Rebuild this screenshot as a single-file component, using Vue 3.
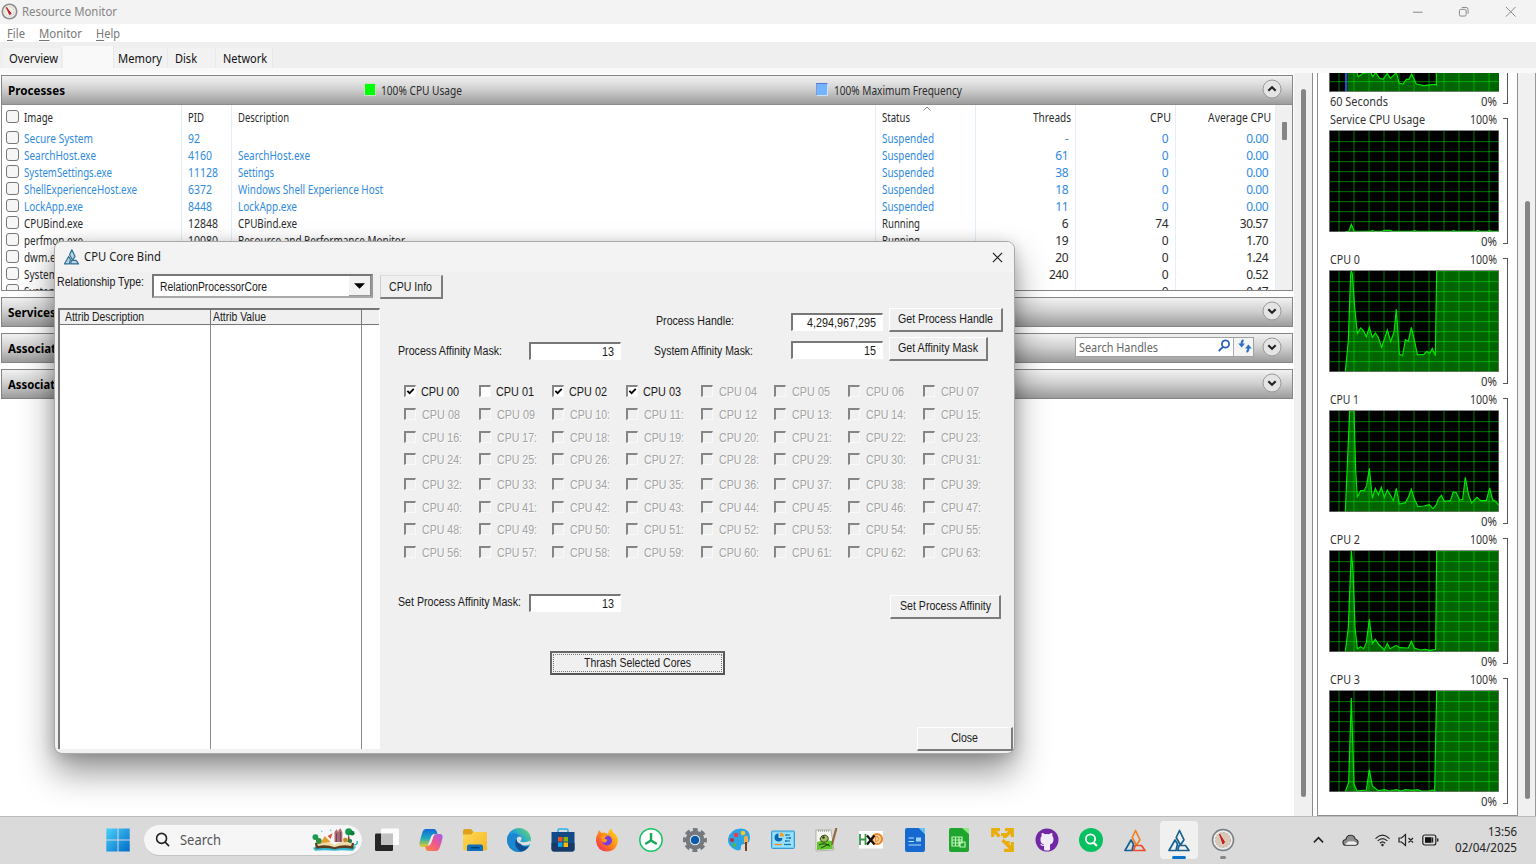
<script setup>
// Condenses a label horizontally to a given width in px, keeping its place in the flow.
const vFit = {
  mounted(el, { value }) {
    el.style.display = 'inline-block'
    const natural = el.getBoundingClientRect().width
    el.style.transformOrigin = 'left center'
    el.style.transform = `scaleX(${value / natural})`
    el.style.marginRight = `${value - natural}px`
  },
}

const tabs = [
  { name: 'Overview', w: 49, cls: 'tab-overview' },
  { name: '', w: 0, cls: 'tab-cpu' },
  { name: 'Memory', w: 44, cls: 'tab-memory' },
  { name: 'Disk', w: 22, cls: 'tab-disk' },
  { name: 'Network', w: 44, cls: 'tab-network' },
]

const rows = [
  { image: 'Secure System', iw: 69, pid: '92', pw: 12, desc: '', dw: 0, status: 'Suspended', threads: '-', cpu: '0', avg: '0.00', off: true },
  { image: 'SearchHost.exe', iw: 72, pid: '4160', pw: 24, desc: 'SearchHost.exe', dw: 72, status: 'Suspended', threads: '61', cpu: '0', avg: '0.00', off: true },
  { image: 'SystemSettings.exe', iw: 88, pid: '11128', pw: 30, desc: 'Settings', dw: 36, status: 'Suspended', threads: '38', cpu: '0', avg: '0.00', off: true },
  { image: 'ShellExperienceHost.exe', iw: 113, pid: '6372', pw: 24, desc: 'Windows Shell Experience Host', dw: 145, status: 'Suspended', threads: '18', cpu: '0', avg: '0.00', off: true },
  { image: 'LockApp.exe', iw: 59, pid: '8448', pw: 24, desc: 'LockApp.exe', dw: 59, status: 'Suspended', threads: '11', cpu: '0', avg: '0.00', off: true },
  { image: 'CPUBind.exe', iw: 59, pid: '12848', pw: 30, desc: 'CPUBind.exe', dw: 59, status: 'Running', threads: '6', cpu: '74', avg: '30.57' },
  { image: 'perfmon.exe', iw: 59, pid: '10080', pw: 30, desc: 'Resource and Performance Monitor', dw: 167, status: 'Running', threads: '19', cpu: '0', avg: '1.70' },
  { image: 'dwm.exe', iw: 42, pid: '', pw: 0, desc: '', dw: 0, status: '', threads: '20', cpu: '0', avg: '1.24' },
  { image: 'System', iw: 34, pid: '', pw: 0, desc: '', dw: 0, status: '', threads: '240', cpu: '0', avg: '0.52' },
  { image: 'System', iw: 34, pid: '', pw: 0, desc: '', dw: 0, status: '', threads: '', cpu: '0', avg: '0.47' },
]

const closedPanels = [
  { name: 'Services', w: 48 },
  { name: 'Associated Handles', w: 112, search: true },
  { name: 'Associated Modules', w: 112 },
]

const charts = [
  { title: 'Service CPU Usage', w: 95, pts: '137,393 147,393 155,371 163,391 212,392 218,390 224,392 248,392 254,389 272,389 277,392 338,392 345,390 352,392 456,392 462,390 468,392 528,392 535,390 541,392 564,392 570,390 576,392 597,392' },
  { title: 'CPU 0', w: 30, pts: '137,393 146,300 153,100 155,90 158,100 165,200 173,278 183,262 191,270 200,288 209,260 218,290 227,277 236,290 246,320 263,268 273,302 283,275 290,206 299,340 309,345 317,297 326,302 335,260 344,298 353,342 372,342 381,332 390,338 398,323 407,345 411,90 597,90' },
  { title: 'CPU 1', w: 29, pts: '137,393 150,90 163,90 168,270 173,348 183,330 193,330 201,315 209,263 218,353 227,323 236,342 245,320 254,350 263,328 272,343 281,360 290,323 299,370 317,366 326,350 335,326 344,355 355,378 372,376 389,372 400,384 410,372 416,355 425,344 434,362 452,360 461,334 470,336 480,358 489,356 497,290 507,344 516,367 532,350 543,360 560,360 570,322 579,358 588,362 597,374' },
  { title: 'CPU 2', w: 30, pts: '137,393 146,320 155,90 160,150 166,320 173,384 183,378 192,384 200,366 209,296 218,368 227,356 236,370 254,388 263,368 271,384 290,374 300,381 326,382 335,362 344,382 362,388 376,386 390,389 408,386 411,90 597,90' },
  { title: 'CPU 3', w: 30, pts: '137,393 147,365 155,112 163,370 172,391 200,388 209,327 218,376 236,390 255,387 270,391 290,387 303,391 317,387 340,389 354,387 365,391 390,391 398,388 405,391 411,90 597,90' },
]
const gridX = [118, 163, 208, 253, 298, 343, 388, 433, 478, 523, 568]
const gridY = [123, 153, 183, 213, 243, 273, 303, 333, 363]

const noColon = [8, 9, 12]
const cpus = Array.from({ length: 64 }, (_, i) => ({
  label: 'CPU ' + String(i).padStart(2, '0') + (i < 8 || noColon.includes(i) ? '' : ':'),
  w: i < 8 || noColon.includes(i) ? 38 : 40,
  enabled: i < 4,
  checked: i === 0 || i === 2 || i === 3,
}))
</script>

<template>
  <div class="screen">
    <header class="titlebar">
      <svg class="app-icon" viewBox="0 0 18 18">
        <circle cx="9" cy="9" r="8.500" fill="#8e8e8e" /><circle cx="9" cy="9" r="6.800" fill="#f4f1ed" />
        <circle cx="9" cy="9" r="5" fill="none" stroke="#c9b9ae" stroke-width="1" stroke-dasharray="1.5 1" />
        <path d="M5.6 4.6 L10.8 11.2 L9 12.2 Z" fill="#d3201f" stroke="#c01818" />
      </svg>
      <span v-fit="95">Resource Monitor</span>
      <div class="win-buttons">
        <svg viewBox="0 0 12 12"><path d="M1 6.5H11" /></svg>
        <svg viewBox="0 0 12 12"><rect x="1.5" y="3.5" width="7" height="7" rx="1.5" /><path d="M4 1.5H8.5Q10.5 1.5 10.5 3.5V8" /></svg>
        <svg viewBox="0 0 12 12"><path d="M1 1L11 11M11 1L1 11" /></svg>
      </div>
    </header>
    <nav class="menubar">
      <span class="m-file"><span v-fit="18"><u>F</u>ile</span></span>
      <span class="m-mon"><span v-fit="43"><u>M</u>onitor</span></span>
      <span><span v-fit="24"><u>H</u>elp</span></span>
    </nav>
    <div class="tabs">
      <div v-for="t in tabs" :key="t.cls" class="tab" :class="t.cls"><span v-if="t.name" v-fit="t.w">{{ t.name }}</span></div>
    </div>

    <main class="body">
      <section class="left">
        <div class="panels">
          <div class="panel processes">
            <div class="panel-head">
              <b v-fit="57">Processes</b>
              <i class="sw green"></i><span class="usage"><span v-fit="81">100% CPU Usage</span></span>
              <i class="sw blue"></i><span v-fit="128">100% Maximum Frequency</span>
              <svg class="round" viewBox="0 0 20 20"><circle cx="10" cy="10" r="9" /><path d="M6.3 11.8L10 8.2L13.7 11.8" /></svg>
            </div>
            <div class="table">
              <div class="tr th">
                <div class="c image"><i class="box"></i><span v-fit="29">Image</span></div>
                <div class="c"><span v-fit="16">PID</span></div>
                <div class="c"><span v-fit="51">Description</span></div>
                <div class="c status"><span v-fit="28">Status</span>
                  <svg class="sort" viewBox="0 0 8 5"><path d="M.5 4.5L4 1L7.500 4.500" /></svg>
                </div>
                <div class="c r h"><span v-fit="38">Threads</span></div>
                <div class="c r h"><span v-fit="21">CPU</span></div>
                <div class="c r h"><span v-fit="63">Average CPU</span></div>
              </div>
              <div v-for="(row, i) in rows" :key="i" class="tr" :class="{ off: row.off }">
                <div class="c image"><i class="box"></i><span v-fit="row.iw">{{ row.image }}</span></div>
                <div class="c"><span v-if="row.pid" v-fit="row.pw">{{ row.pid }}</span></div>
                <div class="c"><span v-if="row.desc" v-fit="row.dw">{{ row.desc }}</span></div>
                <div class="c"><span v-if="row.status" v-fit="row.off ? 52 : 38">{{ row.status }}</span></div>
                <div class="c r">{{ row.threads }}</div>
                <div class="c r">{{ row.cpu }}</div>
                <div class="c r">{{ row.avg }}</div>
              </div>
              <div class="table-scroll"><i></i></div>
            </div>
          </div>
          <div v-for="p in closedPanels" :key="p.name" class="panel closed">
            <div class="panel-head">
              <b v-fit="p.w">{{ p.name }}</b>
              <div v-if="p.search" class="search">
                <span v-fit="79">Search Handles</span>
                <svg class="mag" viewBox="0 0 14 14"><circle cx="8.500" cy="5" r="3.600" /><path d="M5.900 7.800L1.800 12" /></svg>
                <svg class="refresh" viewBox="0 0 14 14"><path d="M5.500 1.200Q3.600 1.800 3.600 5" /><path d="M8.500 12.800Q10.400 12.200 10.400 9" /><path d="M.2 4.500H7L3.600 8.500ZM7 9.500H13.800L10.400 5.500Z" class="head" /></svg>
              </div>
              <svg class="round" viewBox="0 0 20 20"><circle cx="10" cy="10" r="9" /><path d="M6.300 8.200L10 11.800L13.700 8.200" /></svg>
            </div>
          </div>
        </div>
        <div class="vscroll left-scroll"><i></i></div>
      </section>

      <section class="right">
        <div class="graphs">
          <div class="graph first">
            <div class="plot-wrap">
              <svg class="plot cut" viewBox="88 337 510 57" preserveAspectRatio="none">
                <rect x="88" y="330" width="510" height="64" fill="#000" />
                <path d="M143 394V330H170L176 348L190 338L213 334L219 348L228 336L240 353L250 356L263 338L272 353L290 336L299 368L310 370L320 356L328 356L336 340L350 370L372 375L405 371L410 373L411 330H598V394Z" fill="#006400" />
                <path v-for="x in gridX" :key="x" :d="`M${x} 330V394`" class="grid" />
                <path d="M88 363H598" class="grid" />
                <path d="M139 330V394" stroke="#2f5bff" stroke-width="5" />
                <path d="M170 330L176 348L190 338L213 334L219 348L228 336L240 353L250 356L263 338L272 353L290 336L299 368L310 370L320 356L328 356L336 340L350 370L372 375L405 371L410 373V330" class="trace" />
                <path d="M89.500 330V394M88 392.500H598" stroke="#999" stroke-width="2" fill="none" />
              </svg>
            </div>
            <div class="cap low"><span v-fit="58">60 Seconds</span><span v-fit="16">0%</span></div>
            <i class="bracket"></i>
          </div>
          <div v-for="c in charts" :key="c.title" class="graph">
            <div class="cap"><span v-fit="c.w">{{ c.title }}</span><span v-fit="27">100%</span></div>
            <svg class="plot" viewBox="88 88 510 306" preserveAspectRatio="none">
              <rect x="88" y="88" width="510" height="306" fill="#000" />
              <polygon :points="c.pts + ' 597,393 137,393'" fill="#006400" />
              <path v-for="x in gridX" :key="'x' + x" :d="`M${x} 88V394`" class="grid" />
              <path v-for="y in gridY" :key="'y' + y" :d="`M88 ${y}H598`" class="grid" />
              <polyline :points="c.pts" class="trace" />
              <path d="M88 89.500H598" stroke="#8c8c8c" stroke-width="3" />
              <path d="M89.500 88V394M88 393H598M597 88V394" stroke="#999" stroke-width="2" />
            </svg>
            <div class="cap low"><span></span><span v-fit="16">0%</span></div>
            <i class="bracket"></i>
          </div>
        </div>
        <div class="vscroll right-scroll"><i></i></div>
      </section>
    </main>

    <footer class="taskbar">
      <svg class="ic start" viewBox="0 0 24 24">
        <defs>
          <linearGradient id="win" x1="0" y1="0" x2="24" y2="24" gradientUnits="userSpaceOnUse"><stop offset="0" stop-color="#4cd2fb" /><stop offset="1" stop-color="#0069c8" /></linearGradient>
          <linearGradient id="edge" x1="0" y1="1" x2="1" y2="0"><stop offset="0" stop-color="#0c59a4" /><stop offset=".5" stop-color="#1b9de2" /><stop offset="1" stop-color="#6fdf5a" /></linearGradient>
          <linearGradient id="ff" x1="1" y1="0" x2="0" y2="1"><stop offset="0" stop-color="#ffe226" /><stop offset=".5" stop-color="#ff8a16" /><stop offset="1" stop-color="#f01865" /></linearGradient>
          <linearGradient id="cpa" x1="0" y1="0" x2="0" y2="1"><stop offset="0" stop-color="#1267d8" /><stop offset=".5" stop-color="#1aa8c0" /><stop offset="1" stop-color="#e8cf22" /></linearGradient>
          <linearGradient id="cpb" x1="1" y1="0" x2="0" y2="1"><stop offset="0" stop-color="#a35bf0" /><stop offset=".5" stop-color="#f0588a" /><stop offset="1" stop-color="#ff8b35" /></linearGradient>
          <linearGradient id="fold" x1="0" y1="0" x2="1" y2="1"><stop offset="0" stop-color="#ffd95a" /><stop offset="1" stop-color="#f4b722" /></linearGradient>
        </defs>
        <path d="M.3 .5H11.500V11.500H.3ZM12.500 .5H23.700V11.500H12.500ZM.3 12.500H11.500V23.500H.3ZM12.500 12.500H23.700V23.500H12.500Z" fill="url(#win)" />
      </svg>
      <div class="searchbox">
        <svg class="lens" viewBox="0 0 16 16"><circle cx="7" cy="6.800" r="5.300" /><path d="M10.800 10.800L15 15" /></svg>
        <span v-fit="41">Search</span>
        <svg class="book" viewBox="0 0 48 24">
          <path d="M2 20Q12 16 24 20Q36 16 46 19L43 23Q30 22 24 23Q14 22 4 23Z" fill="#35b8cf" />
          <path d="M4 15Q15 14 24 18Q33 14 44 15L43 21Q32 19 24 21.500Q15 19 5 21Z" fill="#5a3c1e" />
          <path d="M6 14Q16 12 24 17Q32 12 42 14L41 18Q32 16 24 19.500Q16 16 7 18Z" fill="#f0d9a8" />
          <path d="M24 14V4L26 1L28 4V2L30 0L32 4V14Z" fill="#b06a6c" /><path d="M26 5V14M30 4V14" stroke="#5a4670" />
          <path d="M37 14L38.500 5L40 14Z" fill="#7a4a1c" /><circle cx="38.500" cy="3.600" r="3.600" fill="#159a4c" /><circle cx="42" cy="5" r="2.500" fill="#0d8040" />
          <circle cx="4.500" cy="9" r="3" fill="#1a9a50" /><circle cx="8" cy="13" r="3" fill="#2f8f3a" /><path d="M10 15L14 8L20 14Z" fill="#e69b2e" /><path d="M17 8L22 5L20 11Z" fill="#d8503e" />
          <circle cx="35" cy="12" r="2.300" fill="#c88925" /><circle cx="40" cy="13" r="2" fill="#237e49" />
          <circle cx="11" cy="3" r=".8" fill="#58c8e8" /><circle cx="20" cy="2" r=".8" fill="#58c8e8" /><path d="M44 17Q48 17 47 13" stroke="#28b6c6" stroke-width="1.500" fill="none" />
        </svg>
      </div>
      <div class="apps">
        <svg class="ic" viewBox="0 0 24 24"><rect x="0" y="5.500" width="18" height="17.500" rx="1.200" fill="#262626" /><rect x="6" y=".5" width="18" height="16.500" rx="1" fill="#fff" opacity=".92" /><rect x="6" y="5.500" width="12" height="11.500" fill="#c2c2c2" /></svg>
        <svg class="ic" viewBox="0 0 24 24">
          <path d="M7 1H15Q17 1 18 4L18.500 6H15Q13 6 12 9L9.500 17Q9 19 6 19H3Q0 19 .5 15Q1.500 10 3.500 4Q4.500 1 7 1Z" fill="url(#cpa)" />
          <path d="M17 23H9Q7 23 6.500 20L6 18H9Q11 18 12 15L14.500 8Q15 6 18 6H21Q24 6 23.500 10Q22.500 15 20.500 20Q19.500 23 17 23Z" fill="url(#cpb)" />
          <path d="M9 17L12.500 8Q13 6.500 15 6.500L12 15Q11 17.500 9 17Z" fill="#e8e8f2" />
        </svg>
        <svg class="ic" viewBox="0 0 24 24"><path d="M0 3Q0 1 2 1H8L10.500 4H22Q24 4 24 6V10H0Z" fill="#e0a019" /><path d="M0 6.500H8L10.500 4H22.500Q24 4 24 5.500V21Q24 22.500 22.500 22.500H1.500Q0 22.500 0 21Z" fill="url(#fold)" /><path d="M4 23V18.500Q4 16.500 6 16.500H18Q20 16.500 20 18.500V23Z" fill="#0d70bd" /><path d="M7.500 19.700H16.500" stroke="#063f7a" stroke-width="1.500" /></svg>
        <svg class="ic" viewBox="0 0 24 24">
          <circle cx="12" cy="12" r="12" fill="url(#edge)" />
          <path d="M1 8Q5 4 10 6Q15 8 14.500 11Q9 7.500 8 14Q8 20 14 23.500Q3 25 .3 14Q0 11 1 8Z" fill="#1b87d0" />
          <path d="M9 11Q6 18 13.500 23.500Q19 23 22 18Q14 20 13 14Q10 13 9 11Z" fill="#0f4c91" />
          <path d="M13 13.500Q15.500 11 14 9Q11.500 7.500 9.800 10Q9.500 13 11 14.500Q12 15.500 13.300 15.500Q16 19 24 16L23.500 12.500Q18 15.500 13 13.500Z" fill="#dedede" />
        </svg>
        <svg class="ic" viewBox="0 0 24 24"><path d="M7 5V2.500Q7 1 8.500 1H15.500Q17 1 17 2.500V5" fill="none" stroke="#2bb3ee" stroke-width="1.600" /><path d="M.5 4H23.500V21Q23.500 23.500 21 23.500H3Q.5 23.500 .5 21Z" fill="#134a86" /><path d="M.5 15H23.500V21Q23.500 23.500 21 23.500H3Q.5 23.500 .5 21Z" fill="#173a68" /><path d="M7 9H11.500V13.500H7Z" fill="#f25022" /><path d="M12.500 9H17V13.500H12.500Z" fill="#7fba00" /><path d="M7 14.500H11.500V19H7Z" fill="#00a4ef" /><path d="M12.500 14.500H17V19H12.500Z" fill="#ffb900" /></svg>
        <svg class="ic" viewBox="0 0 24 24"><path d="M3 5L4 2L6.500 5L9 4.500Q12 5 13 6Q14 2 16 .5Q17 3 19 5Q23 8 23 13Q22 23 12 23.500Q2 23 1 13Q1 8 3 5Z" fill="url(#ff)" /><circle cx="12" cy="12.500" r="5" fill="#7a3ce0" /><path d="M6 9Q9 6 13 8Q9 9 10 11Q13 11 12 13Q9 16 7 13Z" fill="#ff9b1c" /></svg>
        <svg class="ic" viewBox="0 0 24 24"><circle cx="12" cy="12" r="11.200" fill="#fff" stroke="#1cc368" stroke-width="1.500" /><path d="M12 5V12.500M12 12.500L6.200 16M12 12.500L17.800 16" stroke="#16a858" stroke-width="2.400" fill="none" /></svg>
        <svg class="ic" viewBox="0 0 24 24"><circle cx="12" cy="12" r="7" fill="none" stroke="#75797e" stroke-width="5" /><circle cx="12" cy="12" r="10.300" fill="none" stroke="#75797e" stroke-width="3.400" stroke-dasharray="4.800 3.290" stroke-dashoffset="2.400" /><circle cx="12" cy="12" r="5.200" fill="#f2f2f2" /><circle cx="12" cy="12" r="4.300" fill="#0a5ba8" /></svg>
        <svg class="ic" viewBox="0 0 24 24"><path d="M14 .5Q23 1 23 9Q23 16 18 16Q13 16 14 20Q14 23.500 9 22Q0 18 1 11Q3 1 14 .5Z" fill="#2ea3e4" /><circle cx="9" cy="7" r="2.300" fill="#e83f46" /><circle cx="16" cy="5" r="2.300" fill="#f6c72c" /><circle cx="5" cy="12" r="2.100" fill="#b92f3a" /><circle cx="7.500" cy="17" r="2" fill="#48b955" /><path d="M17 9Q19 6 21 9V15H17Z" fill="#efb04c" /><path d="M18 14H20V23H18Z" fill="#76401b" /></svg>
        <svg class="ic" viewBox="0 0 24 24"><rect x=".5" y="3" width="23" height="17.500" rx="1" fill="#6dd1fa" stroke="#3a9bd4" /><rect x="2" y="4.500" width="20" height="14.500" fill="#99e0fb" /><path d="M7.500 5.500A4 4 0 1 0 11.500 10H7.500Z" fill="#0b65b0" /><path d="M9 4.500V8.500H13A4 4 0 0 0 9 4.500Z" fill="#f79c28" /><path d="M15 7H19M15 10H20M14 13H19M15 6V8M19 9V11M15 12V14" stroke="#0b65b0" /><path d="M3.500 16.500H11" stroke="#f28b1c" stroke-width="1.300" /><path d="M13 16.500H20" stroke="#1377b8" stroke-width="1.300" /></svg>
        <svg class="ic" viewBox="0 0 24 24"><path d="M1 2H16L19 22L1 23Z" fill="#f5f5ee" stroke="#999" stroke-width=".7" /><path d="M2 14Q9 11 17 13L18 21L2 22Z" fill="#64c42c" /><path d="M5 11Q6 7 10 7Q14 8 13 12Q11 15 7 14Z" fill="#a7bb63" stroke="#304c20" /><circle cx="8.500" cy="9.500" r="1.200" fill="#26361a" /><path d="M4 17Q9 14 15 18M6 20L14 16" stroke="#17420c" fill="none" /><path d="M22 .5L18 15L17 17L17 14L20.500 .5Z" fill="#b87a35" stroke="#6d4319" stroke-width=".6" /><path d="M3 3H15" stroke="#777" stroke-dasharray="1 1" /></svg>
        <svg class="ic" viewBox="0 0 24 24"><rect y="3" width="24" height="17.500" fill="#fff" /><path d="M1 6V17M6.500 6V17M1 11.500H6.500" stroke="#38984b" stroke-width="1.800" /><circle cx="18" cy="11" r="5" fill="#f6d09c" stroke="#e98b28" stroke-width="2.200" /><path d="M16.500 8.500V13.500Q20 13.500 20 11Q20 8.500 16.500 8.500Z" fill="none" stroke="#e98b28" /><path d="M8 7.500L15.500 16.500M15.500 7.500L8 16.500" stroke="#111" stroke-width="2.200" /></svg>
        <svg class="ic" viewBox="0 0 24 24"><path d="M4 0H16L22 6V22Q22 24 20 24H4Q2 24 2 22V2Q2 0 4 0Z" fill="#1669cf" /><path d="M16 0L22 0V6Z" fill="#65c3f3" /><path d="M5.500 10H11M5.500 13.500H11M5.500 17H18" stroke="#b5ddff" stroke-width="1.200" /><rect x="13" y="9.500" width="5" height="4" fill="#9fd2ff" /></svg>
        <svg class="ic" viewBox="0 0 24 24"><path d="M4 0H16L22 6V22Q22 24 20 24H4Q2 24 2 22V2Q2 0 4 0Z" fill="#1fa42d" /><path d="M15 0H22V6Z" fill="#8de87f" /><path d="M5 9H15V15H5ZM8.500 9V18M12 9V18M5 12H15M5 15V18H12M13 14H18V19H13Z" stroke="#bff5b6" fill="none" stroke-width="1.200" /></svg>
        <svg class="ic" viewBox="0 0 24 24"><path d="M9 1.700H1.700V9M2 2L8.500 8.500M10 6.500H13.500V10M14 1.700H21.300V9M21 2L14.500 8.500M11.500 12L20 20.500M21.300 14V22.300H13M17 13V18" stroke="#e9ae0c" stroke-width="3.200" fill="none" /></svg>
        <svg class="ic" viewBox="0 0 24 24"><circle cx="12" cy="12" r="11.500" fill="#7228a4" /><path d="M9 22V18Q6 18.500 5 16Q7 16 8 17Q8.500 17 9 16.500Q5 15.500 5.500 11Q5.500 9 6.700 8Q6.200 6.500 6.800 5Q8.500 5 10 6.300Q12 5.800 14 6.300Q15.500 5 17.200 5Q17.800 6.500 17.300 8Q18.500 9 18.500 11Q18.500 15.500 15 16.500V22Q12 23 9 22Z" fill="#f2eaf8" /></svg>
        <svg class="ic" viewBox="0 0 24 24"><circle cx="12" cy="12" r="12" fill="#05c160" /><circle cx="11.500" cy="11" r="4.600" fill="none" stroke="#fff" stroke-width="1.800" /><path d="M14.500 14.500L18 18" stroke="#fff" stroke-width="2.200" /></svg>
        <svg class="ic tri" viewBox="0 0 24 24"><path d="M12.500 2.500L9.200 9.500L13.500 17L17 11.800Z" stroke="#f08224" /><path d="M8 12L2 22.500H9L10.500 16Z" stroke="#17608f" /><path d="M12 17.500H18.500L22 22.500H10.800Z" stroke="#ed4b2a" /></svg>
        <div class="active"><svg class="ic tri" viewBox="0 0 24 24"><path d="M12.500 2.500L9.200 9.500L13.500 17L17 11.800Z" stroke="#17608f" /><path d="M8 12L2 22.500H9L10.500 16Z" stroke="#17608f" /><path d="M12 17.500H18.500L22 22.500H10.800Z" stroke="#17608f" /></svg><i></i></div>
        <div class="running"><svg class="ic" viewBox="0 0 24 24"><circle cx="12" cy="12" r="11.300" fill="#778088" /><circle cx="12" cy="12" r="9.800" fill="#eeeae5" /><circle cx="12" cy="12" r="7.500" fill="#d9c8b9" stroke="#bdb0a2" stroke-dasharray="2 1.500" /><path d="M8.500 6L13.500 14L12 16Z" fill="#d2261f" stroke="#b91b16" /></svg><i></i></div>
      </div>
      <div class="tray">
        <svg class="t-chev" viewBox="0 0 12 8"><path d="M1 6.500L6 1.500L11 6.500" /></svg>
        <svg class="t-cloud" viewBox="0 0 18 14"><path d="M4 12.500Q1 12.500 1 9.500Q1 7 4 6.500Q5 2 9 2Q13 2 14 6Q17 7 17 9.500Q17 12.500 14 12.500Z" fill="#8d8d8d" stroke="#333" /><path d="M3.500 12Q6 7.500 10 8.500Q13 8 16 10.500Q16 12 14 12Z" fill="#efefef" stroke="none" /></svg>
        <svg class="t-wifi" viewBox="0 0 18 15"><path d="M1.500 6Q9 -1.500 16.500 6M3.800 8.500Q9 3.500 14.200 8.500M6.200 11Q9 8.200 11.800 11" /><circle cx="9" cy="12.800" r="1.300" fill="#222" stroke="none" /></svg>
        <svg class="t-snd" viewBox="0 0 16 14"><path d="M1 5H3.500L7.500 1.500V12.500L3.500 9H1ZM10.500 5L15 9.500M15 5L10.500 9.500" /></svg>
        <svg class="t-bat" viewBox="0 0 17 12"><rect x=".8" y="1" width="13" height="10" rx="2" /><rect x="3" y="3.200" width="6.500" height="5.600" fill="#111" stroke="none" /><path d="M10.500 3.500V8.500M15.700 4.500V7.500" stroke-width="1.500" /></svg>
        <div class="clock"><span v-fit="29">13:56</span><span v-fit="62">02/04/2025</span></div>
      </div>
    </footer>

    <div class="dialog">
      <div class="dlg-title">
        <svg class="dlg-icon tri" viewBox="0 0 24 24"><path d="M12.500 2.500L9.200 9.500L13.500 17L17 11.800Z" /><path d="M8 12L2 22.500H9L10.500 16Z" /><path d="M12 17.500H18.500L22 22.500H10.800Z" /></svg>
        <span v-fit="77">CPU Core Bind</span>
        <svg class="dlg-x" viewBox="0 0 12 12"><path d="M1 1L11 11M11 1L1 11" /></svg>
      </div>
      <div class="toolbar">
        <span class="rel"><span v-fit="87">Relationship Type:</span></span>
        <div class="combo"><span v-fit="107">RelationProcessorCore</span><i><svg viewBox="0 0 12 6"><path d="M0 0H12L6 6Z" /></svg></i></div>
        <button class="btn info"><span v-fit="43">CPU Info</span></button>
      </div>
      <div class="dlg-body">
        <div class="list">
          <div class="list-head"><span><span v-fit="79">Attrib Description</span></span><span><span v-fit="53">Attrib Value</span></span><span></span></div>
          <div class="list-body"><i></i><i></i><i></i></div>
        </div>
        <div class="form">
          <div class="fields">
            <div class="f-a"><span class="lab-a"><span v-fit="104">Process Affinity Mask:</span></span><div class="field"><span v-fit="12">13</span></div></div>
            <div class="f-b">
              <div class="lab-h"><span v-fit="78">Process Handle:</span></div>
              <div class="lab-s"><span v-fit="99">System Affinity Mask:</span></div>
            </div>
            <div class="f-c"><div class="field"><span v-fit="69">4,294,967,295</span></div><div class="field second"><span v-fit="12">15</span></div></div>
            <div class="f-d"><button class="btn gph"><span v-fit="95">Get Process Handle</span></button><button class="btn gam"><span v-fit="80">Get Affinity Mask</span></button></div>
          </div>
          <div class="cores">
            <label v-for="c in cpus" :key="c.label" class="core" :class="{ disabled: !c.enabled }">
              <i class="chk"><svg v-if="c.checked" viewBox="0 0 10 10"><path d="M1.500 4.200L4 6.800L8.600 2" /></svg></i>
              <span v-fit="c.w">{{ c.label }}</span>
            </label>
          </div>
          <div class="set-row">
            <span v-fit="123">Set Process Affinity Mask:</span>
            <div class="field"><span v-fit="12">13</span></div>
            <button class="btn spa"><span v-fit="91">Set Process Affinity</span></button>
          </div>
          <button class="btn thrash"><span v-fit="107">Thrash Selected Cores</span></button>
          <button class="btn close"><span v-fit="27">Close</span></button>
        </div>
      </div>
    </div>
  </div>
</template>

<style>
html, body { margin: 0; overflow: hidden; }
</style>

<style scoped>
* { box-sizing: border-box; }
.screen { position: relative; width: 1536px; height: 864px; display: flex; flex-direction: column; background: #fff; font-family: "Noto Sans", "Open Sans", sans-serif; font-size: 12px; color: #2b2b2b; overflow: hidden; white-space: nowrap; line-height: 16px; }
svg { display: block; flex: none; }
i { font-style: normal; }

.titlebar { height: 24px; background: #f3f3f3; display: flex; align-items: center; padding: 0 0 1px 1px; color: #858585; font-size: 12.5px; }
.app-icon { width: 17px; height: 17px; margin-right: 4px; }
.win-buttons { margin-left: auto; display: flex; gap: 35px; padding-right: 20px; }
.win-buttons svg { width: 11.500px; height: 11.500px; fill: none; stroke: #858585; stroke-width: 1; }
.menubar { height: 18px; display: flex; align-items: center; padding: 1px 0 0 7px; color: #777; font-size: 12.5px; }
.m-file { width: 32px; } .m-mon { width: 57px; }
.menubar u { text-underline-offset: 2px; }
.tabs { height: 31px; background: linear-gradient(#efefef 26px, #f9f9f9 26px); display: flex; align-items: flex-end; padding: 0 0 5px 3px; font-size: 12.5px; color: #111; }
.tab { height: 20px; background: #f2f2f2; border-right: 1px solid #e9e9e9; padding: 3px 0 0 6px; }
.tab-overview { width: 59px; }
.tab-cpu { width: 51px; height: 22px; background: #f9f9f9; margin-left: 1px; }
.tab-memory { width: 54px; padding-left: 4px; }
.tab-disk { width: 48px; padding-left: 7px; }
.tab-network { width: 57px; padding-left: 7px; }

.body { height: 743px; display: flex; }
.left { width: 1313px; display: flex; border-right: 1.500px solid #8c8c8c; }
.panels { width: 1293px; padding: 2px 0 0 1px; display: flex; flex-direction: column; gap: 6px; }
.panel { border: 1px solid #858585; border-top-width: 1.500px; }
.processes { height: 216px; overflow: hidden; }
.closed { height: 30px; }
.panel-head { height: 29px; display: flex; align-items: center; padding: 2px 10px 0 6px; background: linear-gradient(#f2f2f2, #d2d2d2 45%, #9c9c9c); border-bottom: 1px solid #8c8c8c; }
.closed .panel-head { height: 28px; border-bottom: 0; padding-top: 1px; }
.panel-head b { font-size: 12.5px; color: #000; }
.sw { width: 12px; height: 13px; border: 1px solid #c9e3c9; }
.sw.green { background: #0f0; margin: -3px 5px 0 299px; }
.sw.blue { background: #72b4ff; border-color: #5577dd #cfdff5 #cfdff5 #7d9bd8; margin: -3px 6px 0 0; }
.usage { width: 435px; }
.round { width: 20px; height: 20px; margin: -4px 0 0 auto; }
.round circle { fill: #e4e4e4; stroke: #999; }
.round path { fill: none; stroke: #222; stroke-width: 2.100; }
.table { position: relative; background: #fff; height: 186px; overflow: hidden; }
.tr { display: grid; grid-template-columns: 180px 50px 644px 100px 100px 100px 100px; height: 17px; }
.tr.th { height: 25px; }
.c { padding: 1px 0 0 6px; border-right: 1px solid #e3eff8; display: flex; align-items: center; }
.c.image { padding-left: 4px; }
.c.image span { margin-left: 5px; }
.c.r { justify-content: flex-end; padding: 1px 7px 0 0; letter-spacing: -0.5px; }
.c.r.h { padding-right: 4px; letter-spacing: 0; }
.c.status { position: relative; }
.sort { position: absolute; left: 47px; top: 1px; width: 8px; height: 5px; fill: none; stroke: #888; }
.off { color: #2f8be0; }
.box { width: 13px; height: 13px; border: 1px solid #777; border-radius: 3px; background: #f6f6f6; margin-top: -3px; }
.table-scroll { position: absolute; right: 0; top: 0; width: 16px; height: 186px; background: #f0f0f0; }
.table-scroll i { display: block; width: 5px; height: 18px; margin: 17px 0 0 6px; border-radius: 1px; background: #858585; }
.search { margin: -3px 0 0 auto; width: 179px; height: 20px; background: linear-gradient(90deg, #fff 157px, #aaa 157px, #aaa 158px, #f4f4f4 158px); border: 1px solid #a0a0a0; display: flex; align-items: center; padding: 2px 0 0 3px; color: #666; }
.search + .round { margin-left: 8px; }
.mag { width: 14px; height: 14px; margin: -4px 0 0 59px; fill: none; stroke: #2b62b8; stroke-width: 1.800; }
.refresh { width: 14px; height: 14px; margin: -4px 0 0 7px; fill: none; stroke: #2a6fc4; stroke-width: 2; }
.refresh .head { fill: #2a6fc4; stroke: none; }
.vscroll { background: #f0f0f0; }
.vscroll i { display: block; width: 5px; border-radius: 3px; background: #858585; }
.left-scroll { width: 18px; margin-left: 1px; }
.left-scroll i { height: 708px; margin: 16px 0 0 6.500px; }

.right { width: 223px; padding-left: 4px; display: flex; border-right: 1px solid #999; background: #fff; }
.graphs { width: 201px; border: solid #8f8f8f; border-width: 0 1px 1.500px 1.500px; overflow: hidden; }
.graph { position: relative; height: 140px; padding-left: 11px; top: -.5px; }
.graph.first { height: 38px; }
.plot { width: 170px; height: 102px; }
.plot.cut { height: 19px; }
.grid { stroke: #00ff00; stroke-opacity: .46; stroke-width: 3; fill: none; }
.trace { stroke: #00e400; stroke-width: 3.600; fill: none; }
.cap { display: flex; justify-content: space-between; width: 170px; height: 19px; padding: 0 2px 1px 1px; align-items: center; color: #333; }
.cap.low { height: 19px; padding-top: 2px; }
.bracket { position: absolute; left: 185px; top: 7px; width: 5px; height: 126px; border: 1.500px solid #555; border-left: 0; }
.first .bracket { top: -1px; height: 32px; border-top: 0; }
.right-scroll { flex: 1; }
.right-scroll i { height: 598px; margin: 128px 0 0 6.500px; }

.taskbar { height: 48px; background: #dadada; border-top: 1px solid #b9bab9; display: flex; align-items: center; padding: 0 0 1px 106px; }
.ic { width: 24px; height: 24px; }
.searchbox { margin-left: 14px; width: 218px; height: 31px; border-radius: 16px; background: #f6f6f6; border-bottom: 1px solid #c5c5c5; display: flex; align-items: center; padding: 0 4px 0 11px; font-size: 14px; color: #555; }
.lens { width: 15px; height: 15px; margin-right: 10px; fill: none; stroke: #222; stroke-width: 1.700; }
.book { width: 47px; height: 24px; margin-left: auto; }
.apps { display: flex; align-items: center; gap: 20px; margin-left: 13px; }
.tri path { fill: none; stroke-width: 1.700; stroke-linejoin: round; }
.active, .running { position: relative; display: flex; justify-content: center; align-items: center; height: 38px; }
.active { width: 38px; background: #f0f0f0; border-radius: 4px; margin: 0 -7px; }
.active i, .running i { position: absolute; bottom: 0; height: 3px; border-radius: 2px; }
.active i { width: 14px; background: #0b72d0; }
.running i { width: 6px; background: #858585; }
.tray { margin-left: auto; display: flex; align-items: center; padding-right: 19px; color: #222; }
.tray svg { fill: none; stroke: #222; stroke-width: 1.200; }
.t-chev { width: 11px; height: 8px; } .t-cloud { width: 17px; height: 14px; margin-left: 18px; } .t-wifi { width: 17px; height: 14px; margin-left: 15px; } .t-snd { width: 16px; height: 14px; margin-left: 7px; } .t-bat { width: 17px; height: 12px; margin-left: 8px; }
.tray .t-chev { stroke-width: 1.800; }
.clock { width: 78px; display: flex; flex-direction: column; align-items: flex-end; }

.dialog { position: absolute; left: 54px; top: 241px; width: 961px; height: 513px; border: 1px solid #a9a9a9; border-radius: 8px; background: #f0f0f0; box-shadow: 0 18px 34px rgba(0, 0, 0, .42), 0 2px 14px rgba(0, 0, 0, .16); font-family: "Liberation Sans", Arial, sans-serif; font-size: 12.5px; overflow: hidden; color: #1a1a1a; display: flex; flex-direction: column; }
.dlg-title { height: 30px; background: #f3f3f3; display: flex; align-items: center; padding: 0 11px 1px 8px; font-family: "Noto Sans", sans-serif; font-size: 12.5px; flex: none; }
.dlg-icon { width: 17px; height: 17px; margin-right: 4px; }
.dlg-icon path { stroke: #2f7195; fill: #bcd3df; }
.dlg-x { width: 11px; height: 11px; margin: 1px 0 0 auto; fill: none; stroke: #222; stroke-width: 1.300; }
.toolbar { height: 36px; display: flex; align-items: flex-start; padding: 3px 0 0 2px; flex: none; }
.rel { width: 95px; margin-top: -1px; }
.combo { width: 221px; height: 24px; margin-top: -1px; background: #fff; border: 2px solid; border-color: #777 #999 #aaa #777; display: flex; align-items: center; justify-content: space-between; padding: 1px 0 0 6px; }
.combo i { width: 22px; height: 20px; margin-top: -1px; background: #f3f3f3; border-right: 1px solid #888; border-bottom: 1px solid #999; display: flex; align-items: center; justify-content: center; }
.combo svg { width: 11px; height: 6px; }
.btn { font: inherit; color: inherit; padding: 0 0 1px; background: #f0f0f0; border: solid; border-width: 1px 2px 2px 1px; border-color: #fff #7c7c7c #7c7c7c #fff; height: 24px; display: flex; align-items: center; justify-content: center; flex: none; }
.btn.info { width: 63px; margin-left: 7px; border-left-color: #ccc; border-top-color: #ddd; padding: 0 2px 0 0; }
.dlg-body { flex: 1; display: flex; min-height: 0; }
.list { width: 322px; height: 441px; margin-left: 3px; border-left: 2px solid #777; border-top: 2px solid #777; border-right: 1px solid #fff; background: #fff; display: flex; flex-direction: column; }
.list-head, .list-body { display: grid; grid-template-columns: 151px 151px 1fr; }
.list-head { height: 15px; border-bottom: 1px solid #777; background: #f0f0f0; line-height: 14px; }
.list-head > span { border-right: 1.500px solid #777; padding-left: 5px; }
.list-head > span:nth-child(2) { padding-left: 2px; }
.list-head > span:last-child { border: 0; }
.list-body { flex: 1; }
.list-body i { border-right: 1.500px solid #8b8b8b; }
.list-body i:last-child { border: 0; }
.form { flex: 1; display: flex; flex-direction: column; padding-left: 18px; }
.fields { height: 73px; display: flex; }
.f-a { width: 256px; padding-top: 34px; display: flex; }
.lab-a { width: 131px; padding-top: 1px; }
.field { width: 92px; height: 18px; background: #fff; border: solid; border-width: 2px 1px 1px 2px; border-color: #777 #fff #fff #777; display: flex; align-items: center; justify-content: flex-end; padding: 1px 6px 0 0; }
.f-b { width: 137px; padding-top: 5px; }
.lab-h { padding-left: 2px; height: 30px; }
.f-c { width: 98px; padding-top: 5px; }
.f-c .field { margin-top: 0; }
.f-c .field.second { margin-top: 10px; }
.gph { width: 114px; } .gam { width: 99px; margin-top: 5px; }
.cores { display: grid; grid-template-columns: 75px 73px 74px 75px 73px 74px 75px 70px; grid-template-rows: 23px 23px 22px 25px 23px 22px 23px 23px; padding-left: 6px; height: 184px; }
.core { display: flex; align-items: flex-start; line-height: 22px; }
.core > span { margin-left: 5px; }
.core.disabled > span { margin-left: 6px; }
.disabled { color: #a3a3a3; text-shadow: 1px 1px #fff; }
.chk { width: 12px; height: 12px; margin-top: 4px; border: solid; border-width: 2px 1px 1px 2px; border-color: #858585 #f9f9f9 #f9f9f9 #858585; background: #fff; }
.disabled .chk { background: #f0f0f0; }
.chk svg { width: 9px; height: 9px; fill: none; stroke: #000; stroke-width: 2; }
.set-row { margin-top: 26px; height: 60px; display: flex; align-items: flex-start; padding-top: 3px; }
.set-row .field { margin-left: 8px; }
.spa { width: 111px; margin-left: 269px; margin-top: 1px; }
.thrash { width: 175px; height: 24px; margin-left: 152px; border: 2px solid; border-color: #666 #555 #555 #666; outline: 1px dotted #777; outline-offset: -4px; }
.close { width: 96px; height: 24px; margin: 52px 1px 0 auto; }
</style>
